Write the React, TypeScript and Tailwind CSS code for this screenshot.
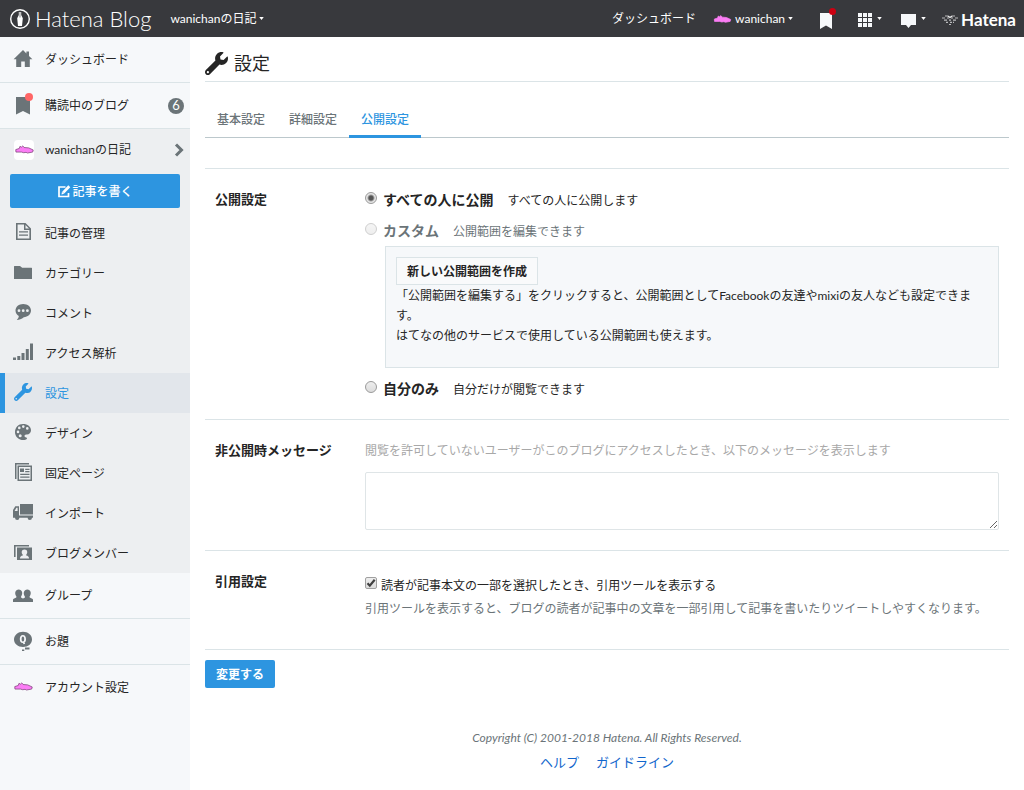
import type { ReactNode } from 'react';
import { FaWrench } from 'react-icons/fa';

function Caret() {
  return (
    <svg viewBox="0 0 6 4" className="h-[3px] w-[5px] shrink-0 fill-current" aria-hidden="true">
      <path d="M0 0h6L3 4z" />
    </svg>
  );
}

function Crocodile({ outline = true, className = '' }: { outline?: boolean; className?: string }) {
  return (
    <svg viewBox="0 0 20 9" className={className} aria-hidden="true">
      <path
        d="M.8 4.600 4.500 3.400 5.200 1.200 6.800 2 8.200.7l1.400 1.700 4.800.4 4.800 2.200-.6 2.200-5.400 1-1.600-.7-2.400.4-2.400-.7H1z"
        fill="#fb7df5"
        stroke={outline ? '#7d4479' : '#fb7df5'}
        strokeWidth=".8"
      />
    </svg>
  );
}

function Icon({ children }: { children: ReactNode }) {
  return (
    <svg viewBox="0 0 20 20" className="size-5 fill-current" aria-hidden="true">
      {children}
    </svg>
  );
}

const HomeIcon = () => (
  <Icon>
    <path d="M10 1 .6 10.200h2.600V18h5v-5.600h3.600V18h5v-7.800h2.600L16 6.900V2.600h-2.600v1.800z" />
  </Icon>
);
const BookmarkIcon = () => (
  <Icon>
    <path d="M3 2h14v17.500L10 16l-7 3.500z" />
  </Icon>
);
const FileIcon = () => (
  <Icon>
    <path
      fillRule="evenodd"
      d="M3 1h9.500L18 6.500V18H3zm1.600 1.600v13.800h11.800V8h-5.400V2.600zM12.500 3v3.500H16zM6 9.200h9v1.400H6zM6 12.400h9v1.400H6z"
    />
  </Icon>
);
const FolderIcon = () => (
  <Icon>
    <path d="M1 4.500Q1 4 1.500 4H7l2.200 1.700h9.300q.5 0 .5.500V17H1z" />
  </Icon>
);
const CommentIcon = () => (
  <Icon>
    <path
      fillRule="evenodd"
      d="M10.200 2C14.600 2 18 4.800 18 8.600s-3.200 6.500-7.200 6.600C8.600 17 6.200 18 3.800 18c1.100-1 1.900-2.300 2-3.900C3.900 13 2.500 11 2.500 8.600 2.500 4.800 5.900 2 10.200 2zM6 7.300a1.400 1.400 0 1 0 0 2.800 1.400 1.400 0 0 0 0-2.800zm4.200 0a1.400 1.400 0 1 0 0 2.800 1.400 1.400 0 0 0 0-2.800zm4.200 0a1.400 1.400 0 1 0 0 2.800 1.400 1.400 0 0 0 0-2.800z"
    />
  </Icon>
);
const SignalIcon = () => (
  <Icon>
    <path d="M0 15.500h3V18H0zM4.300 14h3v4h-3zM8.500 11h3v7h-3zM12.800 7h3v11h-3zM17 1.500h3V18h-3z" />
  </Icon>
);
const PaletteIcon = () => (
  <Icon>
    <path
      fillRule="evenodd"
      d="M10 2c4.700 0 8 2.600 8 6.200 0 2.600-1.900 4.300-4 4.300-1.700 0-2.500.5-2.500 1.500 0 .9.800 1.400 1.700 1.500.8.100 1.100.8.500 1.400-.7.700-1.900 1.100-3.200 1.100C5.700 18 2 14.600 2 10.200 2 5.400 5.400 2 10 2zM5 8.600a1.300 1.300 0 1 0 0 2.600 1.300 1.300 0 0 0 0-2.600zm1.300-4a1.300 1.300 0 1 0 0 2.600 1.300 1.300 0 0 0 0-2.600zm4-1.300a1.300 1.300 0 1 0 0 2.600 1.300 1.300 0 0 0 0-2.600zm4 1.800a1.300 1.300 0 1 0 0 2.600 1.300 1.300 0 0 0 0-2.600zM7.200 12.300a1.500 1.500 0 1 0 0 3 1.500 1.500 0 0 0 0-3z"
    />
  </Icon>
);
const PageIcon = () => (
  <Icon>
    <path d="M2 1h14v1.500H3.500V17H2z" />
    <path
      fillRule="evenodd"
      d="M4.500 3.500H19V19H4.500zM6 5v12.500h11.500V5zM7 6.500h4V10H7zM12.200 6.800h4.300v1.300h-4.300zM12.200 9h4.300v1.300h-4.300zM7.200 11.800h9.300v1.300H7.200zM7.200 14.400h9.300v1.300H7.200z"
    />
  </Icon>
);
const TruckIcon = () => (
  <Icon>
    <path
      fillRule="evenodd"
      d="M7 2h13v10.500H7zM0 14V8l2.300-3.700H6v9.200h14v2.300h-1a2.200 2.200 0 0 1-4.400 0H6.400a2.200 2.200 0 0 1-4.400 0H0zM1.600 8.900h3V5.800H3.400z"
    />
  </Icon>
);
const MemberIcon = () => (
  <Icon>
    <path d="M1 3h15v1.500H2.600V15H1z" />
    <path fillRule="evenodd" d="M4 5.500h15V18H4zM7 16.500h9c0-1.900-1-2.600-2.800-3v-.8c1.700-1.700 1.600-5.200-1.700-5.200S8.100 11 9.800 12.700v.8c-1.800.4-2.800 1.100-2.800 3z" />
  </Icon>
);
const GroupIcon = () => (
  <Icon>
    <path d="M0 17v-2.500c.5-1.500 3-1.500 3.600-2.600C1 8.500 2.200 4.500 5.700 4.500s4.700 4 2.200 7.400c.3.800 1.200 1.100 2.100 1.600.9-.5 1.800-.8 2.100-1.600-2.500-3.400-1.300-7.400 2.200-7.400s4.700 4 2.100 7.400c.6 1.100 3.100 1.100 3.600 2.600V17z" />
  </Icon>
);
const TopicIcon = () => (
  <Icon>
    <path
      fillRule="evenodd"
      d="M10 .8c5 0 9 3.200 9 7.700s-4 7.500-9 7.500-9-3.200-9-7.500S5 .8 10 .8zM9.900 3.900C7.800 3.900 6.800 5.600 6.800 8s1 4 3.100 4l.7 1.300 1.600-.5-.7-1.200c1-.6 1.500-1.900 1.500-3.600 0-2.400-1-4.100-3.100-4.100zm0 1.500c.9 0 1.300.9 1.300 2.600s-.4 2.500-1.300 2.500S8.600 9.700 8.600 8s.4-2.600 1.300-2.600z"
    />
    <path d="M12 16.600h4.500v2H12zM9 18.500h2.300V20H9z" />
  </Icon>
);

function EditIcon() {
  return (
    <svg viewBox="0 0 14 13" className="h-[13px] w-[14px]" fill="none" stroke="currentColor" aria-hidden="true">
      <path d="M8.500 2H2v9.500h9.500V8" strokeWidth="1.700" />
      <path d="M12.300 1.200 6.200 7.600" strokeWidth="2.800" />
      <path d="M4.500 9.400 5 6.800l2.200 2z" fill="currentColor" stroke="none" />
    </svg>
  );
}

function NavItem({ icon, children, tall = false, active = false }: { icon: ReactNode; children: ReactNode; tall?: boolean; active?: boolean }) {
  return (
    <a
      href="#"
      className={
        'flex items-center ' +
        (tall ? 'h-[45px] ' : 'h-10 ') +
        (active ? 'border-l-[5px] border-[#2d95e0] bg-[#e2e6eb] pl-2 text-[#2d95e0]' : 'pl-[13px]')
      }
    >
      <span className={'mr-3 flex w-5 justify-center pb-[2px] ' + (active ? 'text-[#2d95e0]' : 'text-[#6b7478]')}>{icon}</span>
      <span className={tall ? '' : 'pt-[2px]'}>{children}</span>
    </a>
  );
}

function Row({ title, children }: { title: string; children: ReactNode }) {
  return (
    <section className="flex border-t border-[#dbe4e7] px-[10px] pt-5 leading-5">
      <h2 className="w-[150px] shrink-0 text-[13px] leading-5 font-bold">{title}</h2>
      <div className="min-w-0 flex-1 pt-px">{children}</div>
    </section>
  );
}

function RadioLine({ label, note, checked = false, disabled = false }: { label: string; note: string; checked?: boolean; disabled?: boolean }) {
  return (
    <label className={'flex h-5 items-center ' + (disabled ? 'text-[#6b7478]' : '')}>
      <input
        type="radio"
        name="scope"
        defaultChecked={checked}
        disabled={disabled}
        className="mr-[6px] mb-1 size-3 shrink-0 appearance-none rounded-full border border-[#9a9a9a] bg-linear-to-b from-[#eeeeee] to-[#dcdcdc] checked:bg-[radial-gradient(circle,#555_0,#555_2px,#e6e6e6_4px)] disabled:border-[#cfcfcf] disabled:from-[#f5f5f5] disabled:to-[#eeeeee]"
      />
      <span className="text-sm leading-5 font-bold">{label}</span>
      <span className="ml-[14px] pt-[2px]">{note}</span>
    </label>
  );
}

export default function App() {
  return (
    <div className="flex min-h-screen flex-col bg-white font-['Lato','Noto_Sans_CJK_JP',sans-serif] text-xs text-[#252525]">
      <header className="flex h-[37px] items-center bg-[#38393d] pr-2 pl-[9px] text-white">
        <a href="#" className="flex items-center">
          <svg viewBox="0 0 22 22" className="mr-1 size-[22px]" aria-hidden="true">
            <circle cx="11" cy="11" r="9.300" fill="none" stroke="#fff" strokeWidth="1.400" />
            <path d="M9.800 4h2.400v3l1.600 3.300-.8 7.700H9l-.8-7.700L9.800 7z" fill="#fff" />
            <path d="M11 4v5.500" stroke="#38393d" strokeWidth=".6" />
          </svg>
          <span className="text-[22px] leading-6 font-light">Hatena Blog</span>
        </a>
        <button type="button" className="ml-[19px] flex items-center gap-[3px]">
          wanichanの日記
          <Caret />
        </button>
        <nav className="ml-auto flex items-center">
          <a href="#">ダッシュボード</a>
          <button type="button" className="ml-[17px] flex items-center gap-[3px]">
            <Crocodile outline={false} className="h-2 w-[19px]" />
            wanichan
            <Caret />
          </button>
          <button type="button" aria-label="お知らせ" className="relative ml-[27px]">
            <svg viewBox="0 0 12 16" className="mt-1 h-4 w-3 fill-[#f6f8fa]" aria-hidden="true">
              <path d="M0 0h12v16l-6-3.500L0 16z" />
            </svg>
            <span className="absolute -top-px -right-1 size-[7px] rounded-full bg-[#cc0011]" />
          </button>
          <button type="button" aria-label="サービス" className="ml-[26px] flex items-center gap-[5px]">
            <svg viewBox="0 0 14 14" className="mt-[2px] size-[14px] fill-[#f6f8fa]" aria-hidden="true">
              <path d="M0 0h4v4H0zM5 0h4v4H5zM10 0h4v4h-4zM0 5h4v4H0zM5 5h4v4H5zM10 5h4v4h-4zM0 10h4v4H0zM5 10h4v4H5zM10 10h4v4h-4z" />
            </svg>
            <Caret />
          </button>
          <button type="button" aria-label="メッセージ" className="ml-[19px] flex items-center gap-[5px]">
            <svg viewBox="0 0 15 14" className="mt-1 h-[14px] w-[15px] fill-[#f6f8fa]" aria-hidden="true">
              <path d="M0 0h15v11H10L7.500 14 5 11H0z" />
            </svg>
            <Caret />
          </button>
          <a href="#" className="ml-[15px] flex items-center gap-[2px] pt-[2px]">
            <svg viewBox="0 0 18 12" className="h-3 w-[18px]" fill="none" stroke="#b9babc" strokeWidth="1.200" aria-hidden="true">
              <path d="M1 4h3M6 4h2M10 4h2M14 4h3M3 6.200h3M8 6.200h2M12 6.200h3M5 8.400h2M9 8.400h2M12 8.400h1M8 10.500h2M4 2h3M11 2h3" />
              <path d="m7 2 2 1.500L11 2" stroke="#f1f1f1" />
            </svg>
            <span className="text-[17px] leading-5 font-bold">Hatena</span>
          </a>
        </nav>
      </header>

      <div className="flex flex-1">
        <aside className="w-[190px] shrink-0 bg-[#f6f8fa]">
          <nav>
            <NavItem tall icon={<HomeIcon />}>ダッシュボード</NavItem>
            <div className="border-y border-[#dbe4e7]">
              <a href="#" className="flex h-[45px] items-center pr-[6px] pl-[13px]">
                <span className="relative mr-3 pb-[2px] text-[#6b7478]">
                  <BookmarkIcon />
                  <span className="absolute -top-[2px] right-0 size-2 rounded-full bg-[#ff6666]" />
                </span>
                購読中のブログ
                <span className="ml-auto flex size-4 items-center justify-center rounded-full bg-[#6b7478] text-[13px] text-white">6</span>
              </a>
            </div>
            <div className="bg-[#edeff1]">
              <a href="#" className="flex h-[41px] items-center pr-[6px] pl-[14px]">
                <span className="mr-[11px] flex size-5 items-center justify-center rounded-sm bg-white">
                  <Crocodile className="h-[9px] w-[19px]" />
                </span>
                wanichanの日記
                <svg viewBox="0 0 10 14" className="ml-auto h-[14px] w-[10px]" fill="none" stroke="#6b7478" strokeWidth="3" aria-hidden="true">
                  <path d="m2 1.500 5.500 5.500L2 12.500" />
                </svg>
              </a>
              <div className="px-[10px] pt-1 pb-[5px]">
                <button type="button" className="flex h-[34px] w-full items-center justify-center gap-px rounded-xs bg-[#2d95e0] font-medium text-white">
                  <EditIcon />
                  <span className="pt-[2px]">記事を書く</span>
                </button>
              </div>
              <NavItem icon={<FileIcon />}>記事の管理</NavItem>
              <NavItem icon={<FolderIcon />}>カテゴリー</NavItem>
              <NavItem icon={<CommentIcon />}>コメント</NavItem>
              <NavItem icon={<SignalIcon />}>アクセス解析</NavItem>
              <NavItem active icon={<FaWrench className="size-[18px]" />}>設定</NavItem>
              <NavItem icon={<PaletteIcon />}>デザイン</NavItem>
              <NavItem icon={<PageIcon />}>固定ページ</NavItem>
              <NavItem icon={<TruckIcon />}>インポート</NavItem>
              <NavItem icon={<MemberIcon />}>ブログメンバー</NavItem>
            </div>
            <NavItem tall icon={<GroupIcon />}>グループ</NavItem>
            <div className="border-y border-[#dbe4e7]">
              <NavItem tall icon={<TopicIcon />}>お題</NavItem>
            </div>
            <NavItem tall icon={<Crocodile className="h-[9px] w-[19px]" />}>アカウント設定</NavItem>
          </nav>
        </aside>

        <main className="min-w-0 flex-1 px-[15px]">
          <h1 className="flex h-[45px] items-center gap-[6px] border-b border-[#dbe4e7] pt-2 text-lg">
            <FaWrench className="size-[23px]" aria-hidden="true" />
            設定
          </h1>
          <nav className="mt-5 mb-[30px] flex border-b border-[#bcc8cc] font-medium text-[#6b7478]">
            <a href="#" className="flex h-[35px] items-center px-3">基本設定</a>
            <a href="#" className="flex h-[35px] items-center px-3">詳細設定</a>
            <a href="#" className="-mb-px flex h-9 items-center border-b-3 border-[#2d95e0] px-3 pt-[2px] text-[#2d95e0]">公開設定</a>
          </nav>

          <form>
            <Row title="公開設定">
              <div className="pb-5">
                <RadioLine checked label="すべての人に公開" note="すべての人に公開します" />
                <div className="pt-[11px]">
                  <RadioLine disabled label="カスタム" note="公開範囲を編集できます" />
                </div>
                <div className="mt-[5px] mb-[11px] ml-5 border border-[#dbe4e7] bg-[#f6f8fa] px-[10px] pt-[10px] pb-[21px]">
                  <button type="button" className="mb-px flex h-7 items-center border border-[#dbe4e7] bg-[#f9fafb] px-[10px] pt-[2px] font-bold">
                    新しい公開範囲を作成
                  </button>
                  <p>「公開範囲を編集する」をクリックすると、公開範囲としてFacebookの友達やmixiの友人なども設定できます。</p>
                  <p>はてなの他のサービスで使用している公開範囲も使えます。</p>
                </div>
                <RadioLine label="自分のみ" note="自分だけが閲覧できます" />
              </div>
            </Row>

            <Row title="非公開時メッセージ">
              <label htmlFor="message" className="block text-[#a8a8a8]">
                閲覧を許可していないユーザーがこのブログにアクセスしたとき、以下のメッセージを表示します
              </label>
              <textarea id="message" className="mt-[11px] mb-5 block h-[58px] w-full rounded-xs border border-[#dfe5e7] bg-white p-1" />
            </Row>

            <Row title="引用設定">
              <div className="pt-1 pb-[30px]">
                <label className="flex h-5 items-center">
                  <span className="relative mr-1 mb-[6px] size-3 shrink-0">
                    <input
                      type="checkbox"
                      defaultChecked
                      className="peer block size-3 appearance-none rounded-xs border border-[#a0a0a0] bg-linear-to-b from-[#eeeeee] to-[#dcdcdc]"
                    />
                    <svg viewBox="0 0 12 12" className="pointer-events-none absolute inset-0 hidden size-3 peer-checked:block" fill="none" stroke="#404040" strokeWidth="2.200" aria-hidden="true">
                      <path d="m2.500 6.300 2.300 2.400L9.700 2.800" />
                    </svg>
                  </span>
                  読者が記事本文の一部を選択したとき、引用ツールを表示する
                </label>
                <p className="pt-[3px] text-[#6b7478]">
                  引用ツールを表示すると、ブログの読者が記事中の文章を一部引用して記事を書いたりツイートしやすくなります。
                </p>
              </div>
            </Row>
            <div className="border-t border-[#dbe4e7] pt-[10px]">
              <button type="submit" className="h-7 rounded-xs bg-[#2d95e0] px-[11px] pt-[2px] font-bold text-white">
                変更する
              </button>
            </div>
          </form>

          <footer className="pt-10 text-center leading-5">
            <address className="text-[#6b7478]">Copyright (C) 2001-2018 Hatena. All Rights Reserved.</address>
            <div className="mt-1 flex justify-center gap-[17px] text-[13px] text-[#1166cc]">
              <a href="#">ヘルプ</a>
              <a href="#">ガイドライン</a>
            </div>
          </footer>
        </main>
      </div>
    </div>
  );
}
